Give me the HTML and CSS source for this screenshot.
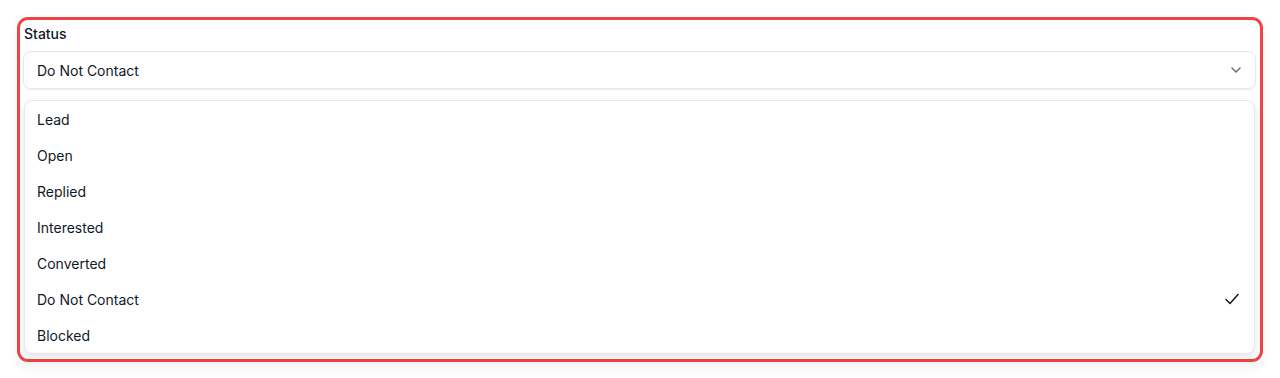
FILE: index.html
```html
<!DOCTYPE html>
<html lang="en">
<head>
  <meta charset="UTF-8" />
  <meta name="viewport" content="width=device-width, initial-scale=1.0"/>
  <title>Status</title>
  <link rel="stylesheet" href="styles.css">
</head>
<body>
  <div class="field">
    <label class="field-label">Status</label>

    <div class="select-trigger">
      <span>Do Not Contact</span>
      <svg class="chevron" width="16" height="16" viewBox="0 0 16 16" fill="none">
        <path d="M4 6l4 4 4-4" stroke="#6b7280" stroke-width="1.6" stroke-linecap="round" stroke-linejoin="round"/>
      </svg>
    </div>

    <ul class="options">
      <li class="option">Lead</li>
      <li class="option">Open</li>
      <li class="option">Replied</li>
      <li class="option">Interested</li>
      <li class="option">Converted</li>
      <li class="option selected">
        <span>Do Not Contact</span>
        <svg class="check" width="16" height="16" viewBox="0 0 16 16" fill="none">
          <path d="M2 8.5l4 4 8-9" stroke="#111827" stroke-width="1.5" stroke-linecap="round" stroke-linejoin="round"/>
        </svg>
      </li>
      <li class="option">Blocked</li>
    </ul>
  </div>
</body>
</html>
```

FILE: styles.css
```css
body {
  margin: 0;
  padding: 17px;
  background: #ffffff;
  font-family: Inter, "Liberation Sans", Arial, sans-serif;
  color: #111827;
}

.field {
  border: 3px solid #ef4444;
  border-radius: 11px;
  padding: 4px 4px 5px 3px;
  box-shadow: 0 6px 14px rgba(0, 0, 0, 0.05);
}

.field-label {
  display: block;
  font-size: 14px;
  font-weight: 500;
  line-height: 20px;
  margin: 0 0 7px 1px;
}

.select-trigger {
  display: flex;
  align-items: center;
  justify-content: space-between;
  height: 36px;
  padding: 0 12px 0 13px;
  border: 1px solid #e5e7eb;
  border-radius: 8px;
  box-shadow: 0 1px 2px rgba(0, 0, 0, 0.08);
  font-size: 14px;
}

.chevron {
  margin-right: -1px;
}

.options {
  list-style: none;
  margin: 11px 1px 0 1px;
  padding: 0;
  border: 1px solid #e5e7eb;
  border-radius: 8px;
  box-shadow: 0 4px 8px rgba(0, 0, 0, 0.1);
}

.option {
  display: flex;
  align-items: center;
  justify-content: space-between;
  height: 36px;
  padding: 0 14px 0 12px;
  font-size: 14px;
}
```
